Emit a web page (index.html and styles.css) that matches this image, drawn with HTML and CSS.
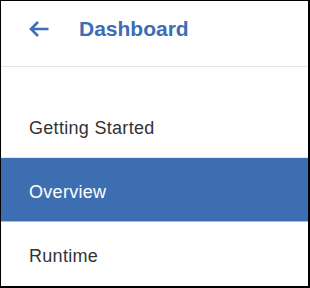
FILE: index.html
```html
<!DOCTYPE html>
<html>
	<head>
		<meta charset="utf-8" />
		<title>Dashboard</title>
		<link rel="stylesheet" href="styles.css">
	</head>
	<body>
		<div id="panel">
			<div class="head">
				<svg class="back" width="22" height="18" viewBox="0 0 22 18">
					<path d="M20.5 9H3M10 2L3 9l7 7" fill="none" stroke="#3d6db3" stroke-width="2.6" />
				</svg>
				<span class="title">Dashboard</span>
			</div>
			<ul class="menu">
				<li>Getting Started</li>
				<li class="on">Overview</li>
				<li>Runtime</li>
			</ul>
		</div>
	</body>
</html>
```

FILE: styles.css
```css
body{
	margin: 0;
	font-family: "Liberation Sans", Arial, sans-serif;
}
#panel{
	width: 310px;
	height: 288px;
	box-sizing: border-box;
	border: solid #000;
	border-width: 1px 2px 2px 1px;
	background: #fff;
	overflow: hidden;
}
.head{
	display: flex;
	align-items: center;
	height: 66px;
	box-sizing: border-box;
	padding: 14px 0 0 27px;
	align-content: flex-start;
	flex-wrap: wrap;
	border-bottom: 1px solid #e2e4e8;
}
.head .back{
	display: block;
	margin-right: 29px;
}
.title{
	font: bold 21px/28px "Liberation Sans", Arial, sans-serif;
	color: #3d6db3;
}
.menu{
	list-style: none;
	margin: 27px 0 0 0;
	padding: 0;
}
.menu li{
	height: 64px;
	box-sizing: border-box;
	padding: 6px 0 0 28px;
	font-size: 18px;
	line-height: 57px;
	letter-spacing: 0.3px;
	color: #333;
	border-bottom: 1px solid #e6e8ec;
}
.menu li.on{
	background: #3d6eb1;
	color: #fff;
	border-bottom-color: #9dbbe0;
}
.menu li:last-child{
	border-bottom: none;
}
```
